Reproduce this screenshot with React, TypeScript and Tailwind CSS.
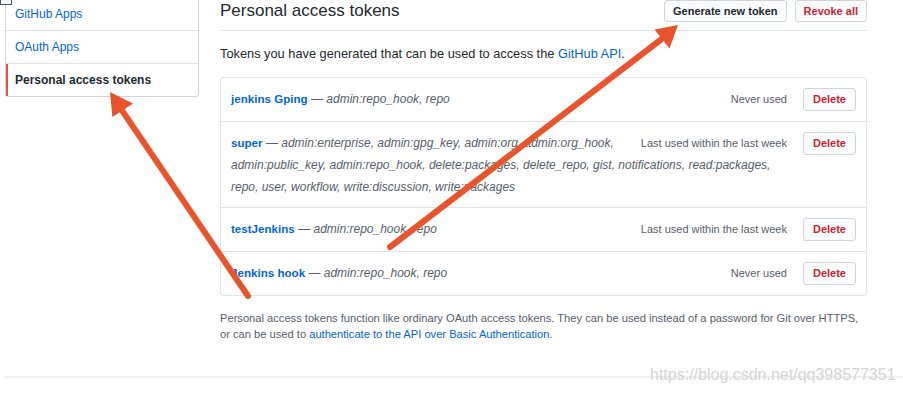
const tokens = [
  { name: "jenkins Gping", scopes: "admin:repo_hook, repo", used: "Never used" },
  {
    name: "super",
    scopes:
      "admin:enterprise, admin:gpg_key, admin:org, admin:org_hook, admin:public_key, admin:repo_hook, delete:packages, delete_repo, gist, notifications, read:packages, repo, user, workflow, write:discussion, write:packages",
    used: "Last used within the last week",
  },
  { name: "testJenkins", scopes: "admin:repo_hook, repo", used: "Last used within the last week" },
  { name: "Jenkins hook", scopes: "admin:repo_hook, repo", used: "Never used" },
];

function Arrows() {
  return (
    <svg className="absolute inset-0 pointer-events-none" width="903" height="393" viewBox="0 0 903 393">
      {/* arrow to sidebar item */}
      <line x1="248" y1="296" x2="121" y2="109" stroke="#e8542c" strokeWidth="6" strokeLinecap="round" />
      <polygon points="110,92 133,103.5 112.4,117" fill="#e8542c" />
      {/* arrow to generate button */}
      <line x1="390" y1="247" x2="663" y2="38" stroke="#e8542c" strokeWidth="6" strokeLinecap="round" />
      <polygon points="678,25 654.5,29.5 669.5,48.5" fill="#e8542c" />
    </svg>
  );
}

export default function App() {
  return (
    <div
      className="relative w-[903px] h-[393px] overflow-hidden bg-white text-[#24292e]"
      style={{ fontFamily: '"Liberation Sans", Arial, sans-serif' }}
    >
      {/* cut-off element in the corner */}
      <div className="absolute top-0 left-0 w-[12px] h-[5px] border border-t-0 border-[#4b5563] bg-[#f3f4f6]" />

      <div className="flex pl-[5px] gap-[21px]">
        {/* SIDEBAR */}
        <nav className="w-[194px] -mt-[3px] self-start border border-[#d1d5da] rounded-[3px] text-[12px] leading-[18px]">
          <div className="px-[9px] py-[7px] border-b border-[#e1e4e8] text-[#0366d6]">GitHub Apps</div>
          <div className="px-[9px] py-[7px] border-b border-[#e1e4e8] text-[#0366d6]">OAuth Apps</div>
          <div className="px-[7px] py-[7px] border-l-2 border-[#d9583f] font-bold text-[#24292e]">
            Personal access tokens
          </div>
        </nav>

        {/* MAIN */}
        <main className="w-[647px]">
          <div className="flex justify-between items-start border-b border-[#e1e4e8] pb-[8px]">
            <h1 className="text-[17px] leading-[22px] font-normal">Personal access tokens</h1>
            <div className="flex gap-[8px] pl-[4px]">
              <button className="h-[22px] px-[8px] text-[11px] font-bold bg-[#fafbfc] border border-[#d1d5da] rounded-[3px] text-[#24292e]">
                Generate new token
              </button>
              <button className="h-[22px] px-[8px] text-[11px] font-bold bg-[#fafbfc] border border-[#d1d5da] rounded-[3px] text-[#cb2431]">
                Revoke all
              </button>
            </div>
          </div>

          <p className="mt-[14px] text-[12.8px] leading-[18px]">
            Tokens you have generated that can be used to access the{" "}
            <span className="text-[#0366d6]">GitHub API</span>.
          </p>

          <div className="mt-[14px] border border-[#e1e4e8] rounded-[3px]">
            {tokens.map((t, i) => (
              <div
                key={t.name}
                className={`pt-[10px] pb-[9px] px-[10px] text-[12px] leading-[22px] flow-root ${i > 0 ? "border-t border-[#e1e4e8]" : ""}`}
              >
                <div className="float-right h-[24px] pl-[16px]">
                  <button className="h-[23px] px-[9px] text-[11px] leading-[21px] font-bold bg-[#fafbfc] border border-[#d1d5da] rounded-[3px] text-[#cb2431]">
                    Delete
                  </button>
                </div>
                <span className="float-right text-[11px] text-[#586069]">{t.used}</span>
                <span className="font-bold text-[#0366d6] text-[11.6px]">{t.name}</span>
                <span className="text-[#586069]"> — </span>
                <em className="text-[#586069]">{t.scopes}</em>
              </div>
            ))}
          </div>

          <p className="mt-[14px] text-[11.15px] leading-[16px] text-[#586069]">
            Personal access tokens function like ordinary OAuth access tokens. They can be used instead of a password for
            Git over HTTPS,
            <br />
            or can be used to <span className="text-[#0366d6]">authenticate to the API over Basic Authentication</span>.
          </p>
        </main>
      </div>

      {/* footer rule */}
      <div className="mt-[34px] ml-[4px] border-t-2 border-[#efefef]" />

      {/* watermark */}
      <div className="absolute left-[650px] top-[365px] text-[16px] leading-[20px] text-[#d4d4d4]">
        https://blog.csdn.net/qq398577351
      </div>

      <Arrows />
    </div>
  );
}
